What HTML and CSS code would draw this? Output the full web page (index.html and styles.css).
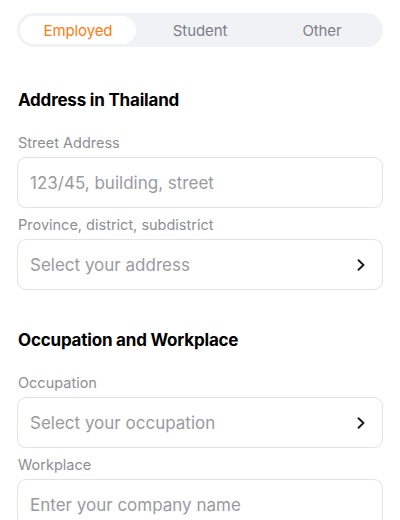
FILE: index.html
```html
<!DOCTYPE html>
<html lang="en">
<head>
<meta charset="utf-8">
<title>Form</title>
<link rel="stylesheet" href="styles.css">
</head>
<body>
<div class="page">
  <div class="segmented">
    <div class="seg seg-active">Employed</div>
    <div class="seg">Student</div>
    <div class="seg">Other</div>
  </div>

  <h2 class="section-title first">Address in Thailand</h2>
  <div class="field">
    <div class="label">Street Address</div>
    <div class="input"><span class="placeholder">123/45, building, street</span></div>
  </div>
  <div class="field">
    <div class="label">Province, district, subdistrict</div>
    <div class="input select"><span class="placeholder">Select your address</span>
      <svg class="chev" width="10" height="12" viewBox="0 0 10 12"><path d="M2.5 1.2 L7.5 6 L2.5 10.8" fill="none" stroke="#1c1c1e" stroke-width="1.9" stroke-linecap="round" stroke-linejoin="round"/></svg>
    </div>
  </div>

  <h2 class="section-title">Occupation and Workplace</h2>
  <div class="field">
    <div class="label">Occupation</div>
    <div class="input select"><span class="placeholder">Select your occupation</span>
      <svg class="chev" width="10" height="12" viewBox="0 0 10 12"><path d="M2.5 1.2 L7.5 6 L2.5 10.8" fill="none" stroke="#1c1c1e" stroke-width="1.9" stroke-linecap="round" stroke-linejoin="round"/></svg>
    </div>
  </div>
  <div class="field">
    <div class="label">Workplace</div>
    <div class="input"><span class="placeholder">Enter your company name</span></div>
  </div>
</div>
</body>
</html>
```

FILE: styles.css
```css
* { box-sizing: border-box; }
html, body { margin: 0; padding: 0; background: #ffffff; }
body {
  font-family: Inter, "Noto Sans", "Liberation Sans", sans-serif;
  color: #000;
}
.page {
  padding: 13px 17px 0 17px;
  display: flex;
  flex-direction: column;
}
.segmented {
  display: grid;
  grid-template-columns: 1fr 1fr 1fr;
  gap: 6px;
  padding: 3px;
  height: 34px;
  background: #f1f2f6;
  border-radius: 17px;
}
.seg {
  display: flex;
  align-items: center;
  justify-content: center;
  font-size: 15px;
  color: #7c7e8a;
  border-radius: 14px;
  letter-spacing: -0.1px;
}
.seg-active {
  background: #ffffff;
  color: #ff7a0f;
}
.section-title {
  margin: 39px 0 0 1px;
  font-size: 17px;
  line-height: 22px;
  font-weight: 700;
  letter-spacing: -0.2px;
}
.section-title.first { margin-top: 42px; }
.field { display: flex; flex-direction: column; }
.section-title + .field { margin-top: 22px; }
.field + .field { margin-top: 7px; }
.label {
  font-size: 14.5px;
  line-height: 20px;
  color: #8d8e93;
  margin-left: 1px;
}
.input {
  margin-top: 4px;
  height: 51px;
  border: 1px solid #e2e2e6;
  border-radius: 9px;
  display: flex;
  align-items: center;
  justify-content: space-between;
  padding: 0 16px 0 12px;
}
.placeholder {
  font-size: 17px;
  color: #9a9a9f;
  letter-spacing: 0;
}
.chev { flex: none; }
```
